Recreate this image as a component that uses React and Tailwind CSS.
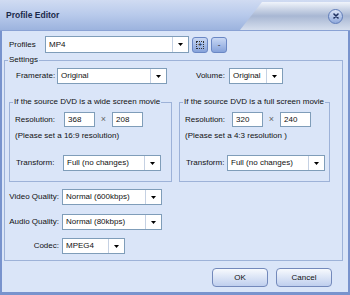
import React from 'react';

const Arrow = () => (
  <svg width="5" height="3" viewBox="0 0 5 3">
    <path d="M0 0H5L2.5 3Z" fill="#000" />
  </svg>
);

const Combo = ({ text, className }) => (
  <div className={`h-[16px] bg-white border border-[#7f9db9] flex items-stretch ${className}`}>
    <div className="flex-1 flex items-center pl-[3px] leading-none whitespace-nowrap overflow-hidden">{text}</div>
    <div className="w-[16px] border-l border-[#c5d1e3] flex items-center justify-center">
      <Arrow />
    </div>
  </div>
);

const Field = ({ value }) => (
  <div className="w-[31px] h-[15px] bg-white border border-[#7f9db9] flex items-center pl-[3px] leading-none">{value}</div>
);

const Group = ({ title, className, children }) => (
  <fieldset className={`border border-[#9db2d8] p-0 m-0 min-w-0 ${className}`}>
    <legend className="ml-[3px] px-[1px] leading-[10px]">{title}</legend>
    {children}
  </fieldset>
);

const Button = ({ children }) => (
  <button className="w-[56px] h-[19px] rounded-[4px] border border-[#7389bb] bg-gradient-to-b from-[#f7f9fd] to-[#bfcfee] flex items-center justify-center leading-none text-[#111]">
    {children}
  </button>
);

const Sizes = ({ a, b, note, labelW }) => (
  <>
    <div className="mt-[5px] h-[15px] flex items-center pl-[5px]">
      <span className={labelW}>Resolution:</span>
      <Field value={a} />
      <span className="w-[17px] text-center text-[#666] text-[9px]">×</span>
      <Field value={b} />
    </div>
    <div className="mt-[4px] pl-[5px] leading-[10px] whitespace-nowrap">{note}</div>
  </>
);

export default function App() {
  return (
    <div className="w-[350px] h-[295px] bg-[#7893cd] flex flex-col font-['Liberation_Sans',Arial,sans-serif] text-[8px] text-[#111] overflow-hidden">
      {/* title bar */}
      <div className="h-[31px] shrink-0 flex items-stretch bg-gradient-to-b from-[#d0dbf2] via-[#b8caeb] to-[#9cb3de] border-b border-[#8aa2d4]">
        <div className="flex-1 flex items-center pl-[6px]">
          <span className="text-[8.5px] font-bold text-[#1b2a4a]">Profile Editor</span>
        </div>
        <div className="relative w-[110px] mt-[2px] flex items-center justify-end pr-[7px]">
          <svg className="absolute inset-0" width="110" height="28" viewBox="0 0 110 28" preserveAspectRatio="none">
            <defs>
              <linearGradient id="tab" x1="0" y1="0" x2="0" y2="1">
                <stop offset="0" stopColor="#f0f4fb" />
                <stop offset="0.5" stopColor="#a8b7d3" />
                <stop offset="1" stopColor="#d6dfee" />
              </linearGradient>
            </defs>
            <path d="M0 28L22 0H110V28Z" fill="url(#tab)" />
          </svg>
          <div className="relative w-[15px] h-[15px] rounded-full border border-[#5f7cb9] bg-gradient-to-b from-[#dbe4f6] to-[#90a9dc] flex items-center justify-center">
            <svg width="6" height="6" viewBox="0 0 6 6">
              <path d="M1 1L5 5M5 1L1 5" stroke="#1d2f5e" strokeWidth="1.6" strokeLinecap="round" />
            </svg>
          </div>
        </div>
      </div>

      {/* body */}
      <div className="flex-1 mx-[2px] mb-[3px] bg-[#dae5f8] flex flex-col">
        <div className="mt-[5px] h-[17px] flex items-center">
          <span className="pl-[7px] w-[43px]">Profiles</span>
          <Combo text="MP4" className="w-[144px] h-[17px]" />
          <div className="ml-[3px] w-[16px] h-[16px] rounded-[3px] border border-[#6a87c4] bg-gradient-to-b from-[#c9d8f4] to-[#86a2da] flex items-center justify-center">
            <div className="w-[8px] h-[8px] border border-dotted border-[#333] flex items-center justify-center text-[8px] leading-none">+</div>
          </div>
          <div className="ml-[3px] w-[16px] h-[16px] rounded-[3px] border border-[#6a87c4] bg-gradient-to-b from-[#c9d8f4] to-[#86a2da] flex items-center justify-center leading-none">-</div>
        </div>

        <Group title="Settings" className="mt-[2px] ml-[2px] w-[339px] h-[206px]">
          <div className="mt-[3px] h-[16px] flex items-center">
            <span className="pl-[11px] w-[52px]">Framerate:</span>
            <Combo text="Original" className="w-[110px]" />
            <span className="ml-[29px] w-[33px]">Volume:</span>
            <Combo text="Original" className="w-[54px]" />
          </div>

          <div className="mt-[13px] flex">
            <Group title="If the source DVD is a wide screen movie" className="ml-[4px] w-[163px] h-[85px]">
              <Sizes a="368" b="208" note="(Please set a 16:9 resolution)" labelW="w-[49px]" />
              <div className="mt-[14px] h-[16px] flex items-center">
                <span className="pl-[6px] w-[53px]">Transform:</span>
                <Combo text="Full (no changes)" className="w-[98px]" />
              </div>
            </Group>
            <Group title="If the source DVD is a full screen movie" className="ml-[7px] w-[151px] h-[85px]">
              <Sizes a="320" b="240" note="(Please set a 4:3 resolution )" labelW="w-[47px]" />
              <div className="mt-[14px] h-[16px] flex items-center">
                <span className="pl-[6px] w-[47px]">Transform:</span>
                <Combo text="Full (no changes)" className="w-[98px]" />
              </div>
            </Group>
          </div>

          <div className="mt-[7px] h-[16px] flex items-center">
            <span className="w-[57px] pr-[3px] text-right">Video Quality:</span>
            <Combo text="Normal (600kbps)" className="w-[100px]" />
          </div>
          <div className="mt-[9px] h-[16px] flex items-center">
            <span className="w-[57px] pr-[3px] text-right">Audio Quality:</span>
            <Combo text="Normal (80kbps)" className="w-[100px]" />
          </div>
          <div className="mt-[8px] h-[16px] flex items-center">
            <span className="w-[57px] pr-[3px] text-right">Codec:</span>
            <Combo text="MPEG4" className="w-[63px]" />
          </div>
        </Group>

        <div className="mt-[7px] flex pl-[210px] gap-[8px]">
          <Button>OK</Button>
          <Button>Cancel</Button>
        </div>
      </div>
    </div>
  );
}
